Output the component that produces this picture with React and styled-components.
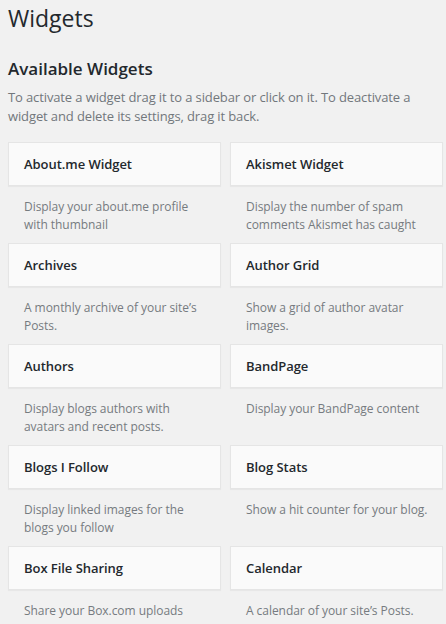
import React from "react";
import styled, { createGlobalStyle } from "styled-components";

const widgets = [
    { title: "About.me Widget", desc: "Display your about.me profile with thumbnail" },
    { title: "Akismet Widget", desc: "Display the number of spam comments Akismet has caught" },
    { title: "Archives", desc: "A monthly archive of your site’s Posts." },
    { title: "Author Grid", desc: "Show a grid of author avatar images." },
    { title: "Authors", desc: "Display blogs authors with avatars and recent posts." },
    { title: "BandPage", desc: "Display your BandPage content" },
    { title: "Blogs I Follow", desc: "Display linked images for the blogs you follow" },
    { title: "Blog Stats", desc: "Show a hit counter for your blog." },
    { title: "Box File Sharing", desc: "Share your Box.com uploads" },
    { title: "Calendar", desc: "A calendar of your site’s Posts." },
];

const GlobalStyle = createGlobalStyle`
    html, body {
        margin: 0;
        background: #f1f1f1;
        overflow: hidden;
    }
    body {
        font-family: "Open Sans", "Liberation Sans", sans-serif;
        color: #23282d;
    }
`;

const Wrap = styled.div`
    padding: 0 3px 0 8px;
`;

const Title = styled.h1`
    margin: 0;
    padding-top: 4px;
    font-size: 23px;
    font-weight: 400;
    line-height: 29px;
    color: #23282d;
`;

const SectionTitle = styled.h2`
    margin: 25px 0 0;
    font-size: 17px;
    font-weight: 600;
    line-height: 22px;
    color: #23282d;
`;

const Intro = styled.p`
    margin: 8px 0 0;
    font-size: 13px;
    line-height: 19px;
    letter-spacing: -0.12px;
    color: #72777c;
    width: 420px;
`;

const WidgetList = styled.div`
    display: grid;
    grid-template-columns: 213px 213px;
    column-gap: 9px;
    margin-top: 16px;
`;

const WidgetItem = styled.div`
    height: 101px;
`;

const WidgetTop = styled.div`
    height: 42px;
    display: flex;
    align-items: center;
    padding: 0 15px;
    background: #fafafa;
    border: 1px solid #e5e5e5;
    box-shadow: 0 1px 1px rgba(0, 0, 0, 0.04);
    font-size: 13px;
    font-weight: 600;
    letter-spacing: -0.05px;
    color: #23282d;
`;

const WidgetDescription = styled.div`
    padding: 12px 8px 0 16px;
    font-size: 12px;
    line-height: 18px;
    letter-spacing: -0.05px;
    color: #767b80;
`;

const Widget = ({ title, desc }) => (
    <WidgetItem>
        <WidgetTop>{title}</WidgetTop>
        <WidgetDescription>{desc}</WidgetDescription>
    </WidgetItem>
);

const App = () => (
    <Wrap>
        <GlobalStyle />
        <Title>Widgets</Title>
        <SectionTitle>Available Widgets</SectionTitle>
        <Intro>
            To activate a widget drag it to a sidebar or click on it. To
            deactivate a widget and delete its settings, drag it back.
        </Intro>
        <WidgetList>
            {widgets.map((w) => (
                <Widget key={w.title} title={w.title} desc={w.desc} />
            ))}
        </WidgetList>
    </Wrap>
);

export default App;
